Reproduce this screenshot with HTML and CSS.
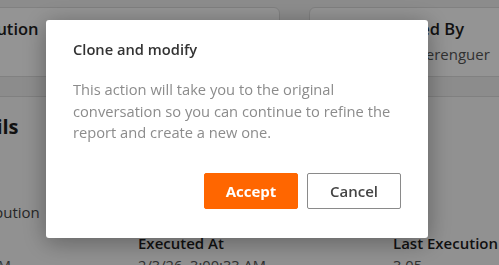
FILE: index.html
```html
<!DOCTYPE html>
<html lang="en">
<head>
<meta charset="utf-8">
<title>Clone and modify</title>
<link rel="stylesheet" href="styles.css">
</head>
<body>
<div class="page">
  <div class="cards">
    <div class="card card-a">
      <div class="card-title">Last Execution</div>
      <div class="card-value">3.05</div>
    </div>
    <div class="card card-b">
      <div class="card-title">Created By</div>
      <div class="card-value">Marc Berenguer</div>
    </div>
  </div>
  <section class="details">
    <h2 class="details-title">Details</h2>
    <div class="details-sub">Distribution</div>
    <div class="fields">
      <div class="field">
        <div class="field-label">Created At</div>
        <div class="field-value">2/1/26, 9:12:04 AM</div>
      </div>
      <div class="field">
        <div class="field-label">Executed At</div>
        <div class="field-value">2/3/26, 3:00:33 AM</div>
      </div>
      <div class="field">
        <div class="field-label">Last Execution</div>
        <div class="field-value">3.05</div>
      </div>
    </div>
  </section>
</div>
<div class="overlay"></div>
<div class="modal" role="dialog" aria-labelledby="m-title">
  <h1 class="modal-title" id="m-title">Clone and modify</h1>
  <p class="modal-text">This action will take you to the original conversation so you can continue to refine the report and create a new one.</p>
  <div class="modal-actions">
    <button class="btn btn-primary">Accept</button>
    <button class="btn btn-secondary">Cancel</button>
  </div>
</div>
</body>
</html>
```

FILE: styles.css
```css
html, body {
  margin: 0;
  padding: 0;
}
body {
  background: #f2f2f2;
  font-family: "Open Sans", "Noto Sans", sans-serif;
  color: #222;
  overflow: hidden;
  height: 265px;
}
.page {
  padding-top: 7px;
}
.cards {
  display: flex;
  gap: 29px;
  margin-left: -102px;
}
.card {
  flex-shrink: 0;
  background: #fff;
  border: 1px solid #dedede;
  border-radius: 6px;
  box-sizing: border-box;
  height: 70px;
  padding: 9px 16px 8px;
}
.card-a {
  width: 382px;
  padding-left: 24px;
}
.card-b {
  width: 260px;
  padding-left: 67px;
}
.card-title {
  font-size: 16.5px;
  font-weight: 600;
  line-height: 24px;
  color: #1e1e1e;
}
.card-value {
  font-size: 15px;
  line-height: 22px;
  margin-top: 2px;
  color: #555;
}
.details {
  margin-top: 19px;
  background: #fafafa;
  border-top: 1px solid #dcdcdc;
  padding-top: 16px;
  margin-left: -43px;
}
.details-title {
  margin: 0 0 0 -8px;
  font-size: 20px;
  font-weight: 700;
  line-height: 28px;
  color: #1e1e1e;
}
.details-sub {
  margin-top: 60px;
  font-size: 15px;
  line-height: 22px;
  color: #444;
}
.fields {
  display: grid;
  grid-template-columns: repeat(3, 255px);
  margin-left: -74px;
  margin-top: 9px;
}
.field-label {
  font-size: 15px;
  font-weight: 600;
  line-height: 22px;
  color: #1e1e1e;
}
.field-value {
  font-size: 14.7px;
  line-height: 22px;
  color: #555;
}
.overlay {
  position: fixed;
  inset: 0;
  background: rgba(0, 0, 0, 0.42);
}
.modal {
  position: fixed;
  left: 46px;
  top: 20px;
  width: 382px;
  box-sizing: border-box;
  background: #fff;
  border-radius: 3px;
  box-shadow: 0 4px 24px rgba(0, 0, 0, 0.35);
  padding: 18px 27px 29px 27px;
}
.modal-title {
  margin: 0;
  font-size: 14.7px;
  font-weight: 600;
  line-height: 22px;
  color: #333;
}
.modal-text {
  margin: 19px 0 0 0;
  font-size: 14.7px;
  line-height: 21.5px;
  color: #8c8c8c;
}
.modal-actions {
  display: flex;
  justify-content: flex-end;
  gap: 9px;
  margin-top: 29px;
}
.btn {
  width: 94px;
  height: 36px;
  box-sizing: border-box;
  border-radius: 2px;
  font-family: "Open Sans", "Noto Sans", sans-serif;
  font-size: 15px;
  cursor: pointer;
}
.btn-primary {
  background: #ff6600;
  border: 1px solid #ff6600;
  color: #fff;
  font-weight: 700;
}
.btn-secondary {
  background: #fff;
  border: 1px solid #8a8a8a;
  color: #444;
  font-weight: 600;
}
```
